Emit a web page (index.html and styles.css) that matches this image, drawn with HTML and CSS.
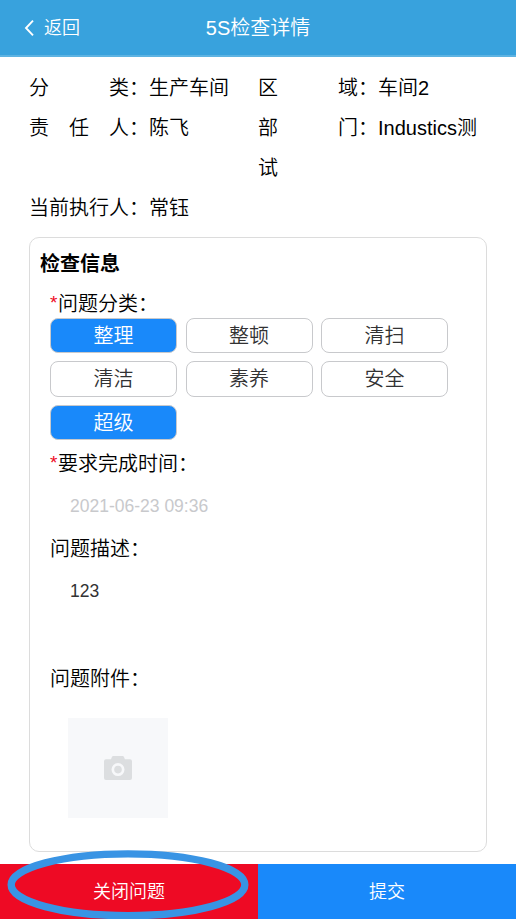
FILE: index.html
```html
<!DOCTYPE html>
<html lang="zh-CN">
<head>
  <meta charset="UTF-8" />
  <meta name="viewport" content="width=device-width, initial-scale=1.0" />
  <title>5S检查详情</title>
  <link rel="stylesheet" href="styles.css">
</head>
<body>
  <header class="nav-bar">
    <div class="back">
      <svg class="back-icon" width="10" height="18" viewBox="0 0 10 18">
        <path d="M9 1.6 L2 9 L9 16.4" fill="none" stroke="#fff" stroke-width="1.9" />
      </svg>
      <span>返回</span>
    </div>
    <h1>5S检查详情</h1>
  </header>

  <main>
    <div class="info">
      <div class="info-item"><span class="label"><i>分</i><i>类</i></span>：生产车间</div>
      <div class="info-item"><span class="label"><i>区</i><i>域</i></span>：车间2</div>
      <div class="info-item"><span class="label"><i>责</i><i>任</i><i>人</i></span>：陈飞</div>
      <div class="info-item"><span class="label"><i>部</i><i>门</i></span>：Industics测试</div>
      <div class="info-item">当前执行人：常钰</div>
    </div>

    <section class="card">
      <h2>检查信息</h2>
      <div class="field-title"><span class="required">*</span>问题分类：</div>
      <div class="tags">
        <div class="tag active">整理</div>
        <div class="tag">整顿</div>
        <div class="tag">清扫</div>
        <div class="tag">清洁</div>
        <div class="tag">素养</div>
        <div class="tag">安全</div>
        <div class="tag active">超级</div>
      </div>
      <div class="field-title time-title"><span class="required">*</span>要求完成时间：</div>
      <div class="field-value disabled">2021-06-23 09:36</div>
      <div class="field-title">问题描述：</div>
      <div class="field-value desc">123</div>
      <div class="field-title">问题附件：</div>
      <div class="upload">
        <svg width="28" height="24" viewBox="0 0 28 24">
          <path fill="#dcdee0" fill-rule="evenodd" d="M9.2 0 H18.6 Q19.6 0 20 1 L20.9 3.2 H26 Q28 3.2 28 5.2 V22 Q28 24 26 24 H2 Q0 24 0 22 V5.2 Q0 3.2 2 3.2 H7 L7.9 1 Q8.3 0 9.2 0 Z M14 7.1 A6.5 6.5 0 1 0 14 20.1 A6.5 6.5 0 1 0 14 7.1 Z" />
          <circle cx="14" cy="13.6" r="3.8" fill="#dcdee0" />
        </svg>
      </div>
    </section>
  </main>

  <footer class="buttons">
    <button class="close-btn">关闭问题</button>
    <button class="submit-btn">提交</button>
    <svg class="highlight" width="242" height="70" viewBox="0 0 242 70">
      <ellipse cx="121" cy="34.8" rx="116.8" ry="30.9" fill="none" stroke="#3994e4" stroke-width="7.4" />
    </svg>
  </footer>
</body>
</html>
```
FILE: styles.css
```css
* {
  margin: 0;
  padding: 0;
  box-sizing: border-box;
}
body {
  display: flex;
  flex-direction: column;
  height: 100vh;
  overflow: hidden;
  font-family: "Liberation Sans", "Noto Sans CJK SC", sans-serif;
  font-size: 20px;
  font-weight: 350;
  color: #000;
  background: #fff;
}
.nav-bar {
  display: grid;
  grid-template-columns: 1fr auto 1fr;
  align-items: center;
  height: 57px;
  padding: 0 24px 2px;
  background: #38a2dd;
  border-bottom: 2px solid #5db3e2;
  color: #fff;
}
.nav-bar h1 {
  font-size: 20px;
  font-weight: 350;
}
.back {
  display: flex;
  align-items: center;
  gap: 10px;
  font-size: 18px;
}
.back span {
  padding-bottom: 2px;
}
.back-icon {
  margin-top: 2px;
}
main {
  flex: 1;
  padding: 11px 29px 12px;
}
.info {
  display: grid;
  grid-template-columns: 1fr 1fr;
  line-height: 40px;
}
.label {
  display: inline-flex;
  justify-content: space-between;
  width: 100px;
}
.label i {
  font-style: normal;
}
.card {
  height: 615px;
  margin-top: 9px;
  padding: 11px 10px 10px;
  border: 1px solid #dcdcdc;
  border-radius: 10px;
}
.card h2 {
  font-size: 20px;
  line-height: 30px;
}
.field-title {
  padding-left: 10px;
  line-height: 30px;
}
.card h2 + .field-title {
  margin-top: 10px;
}
.required {
  display: inline-block;
  width: 8px;
  color: #ee0a24;
  font-size: 19px;
  line-height: 1;
  vertical-align: 2px;
}
.tags {
  display: grid;
  grid-template-columns: repeat(3, 127px);
  grid-auto-rows: 35.6px;
  gap: 8px 8.5px;
  margin-top: -1.4px;
  padding-left: 10px;
}
.tag {
  border: 1px solid #c8c9cc;
  border-radius: 8px;
  color: #323233;
  line-height: 34.6px;
  text-align: center;
}
.tag.active {
  background: #1989fa;
  color: #fff;
}
.time-title {
  margin-top: 9px;
}
.field-value {
  height: 55px;
  padding: 15px 30px;
  color: #323233;
  font-size: 17.5px;
  line-height: 25px;
}
.field-value.disabled {
  color: #c8c9cc;
}
.field-value.desc {
  height: 100px;
}
.upload {
  display: flex;
  align-items: center;
  justify-content: center;
  width: 100px;
  height: 100px;
  margin: 24px 0 0 28px;
  background: #f7f8fa;
}
.buttons {
  position: relative;
  display: flex;
  height: 55px;
}
.buttons button {
  flex: 1;
  padding-bottom: 4px;
  border: none;
  background: #1989fa;
  color: #fff;
  font-family: inherit;
  font-size: 18px;
  font-weight: 350;
}
.buttons .close-btn {
  background: #ee0a24;
}
/* ring drawn over the close button */
.highlight {
  position: absolute;
  left: 7px;
  top: -14px;
  pointer-events: none;
}
```
